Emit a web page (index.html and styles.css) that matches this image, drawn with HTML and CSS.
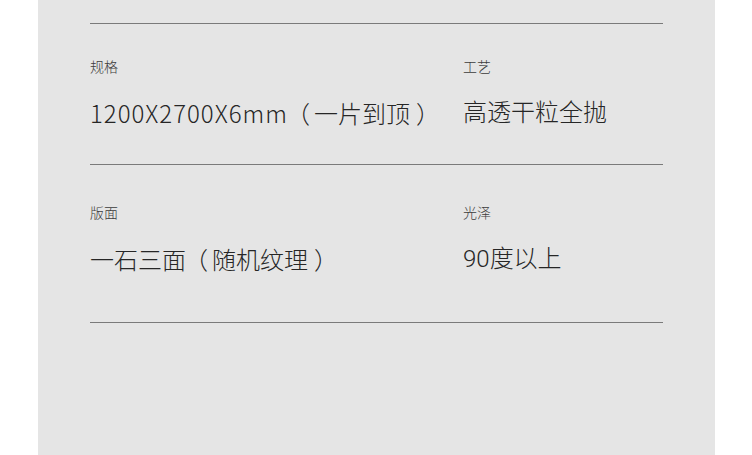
FILE: index.html
```html
<!DOCTYPE html>
<html lang="zh-CN">
  <head>
    <meta charset="UTF-8" />
    <meta name="viewport" content="width=device-width, initial-scale=1.0" />
    <title>产品参数</title>
    <link rel="stylesheet" href="styles.css">
  </head>
  <body>
    <!-- 参数面板 -->
    <div class="panel">
      <div class="spec-row first">
        <div class="spec spec-left">
          <p class="label">规格</p>
          <p class="value"><span class="num">1200X2700X6mm</span><span class="paren open">（</span>一片到顶<span class="paren close">）</span></p>
        </div>
        <div class="spec">
          <p class="label">工艺</p>
          <p class="value">高透干粒全抛</p>
        </div>
      </div>
      <div class="spec-row second">
        <div class="spec spec-left">
          <p class="label">版面</p>
          <p class="value">一石三面<span class="paren open">（</span>随机纹理<span class="paren close">）</span></p>
        </div>
        <div class="spec">
          <p class="label">光泽</p>
          <p class="value">90度以上</p>
        </div>
      </div>
      <div class="spec-end"></div>
    </div>
  </body>
</html>
```

FILE: styles.css
```css
* {
  margin: 0;
  padding: 0;
  box-sizing: border-box;
  font-family: "Noto Sans CJK SC", "Liberation Sans", sans-serif;
}

body {
  background: #ffffff;
  height: 455px;
  overflow: hidden;
}

.panel {
  margin-left: 38px;
  width: 677px;
  height: 455px;
  background: #e5e5e5;
  padding: 23px 52px 0 52px;
}

.spec-row {
  display: flex;
  border-top: 1px solid #7a7a7a;
  width: 573px;
}

.spec-row.first {
  height: 141px;
  padding-top: 32px;
}

.spec-row.second {
  height: 158px;
  padding-top: 37px;
}

.spec-end {
  border-top: 1px solid #7a7a7a;
  width: 573px;
}

.spec-left {
  width: 373px;
}

.label {
  font-size: 14px;
  line-height: 20px;
  font-weight: 300;
  color: #3c3c3c;
}

.value {
  margin-top: 21px;
  font-family: Roboto, "Noto Sans CJK SC", sans-serif;
  font-size: 24px;
  line-height: 32px;
  font-weight: 300;
  color: #262626;
}

.num {
  letter-spacing: 1px;
}

.paren {
  font-weight: 300;
}

.paren.open {
  margin-left: -2px;
  margin-right: 4px;
}

.paren.close {
  margin-left: 6px;
}
```
